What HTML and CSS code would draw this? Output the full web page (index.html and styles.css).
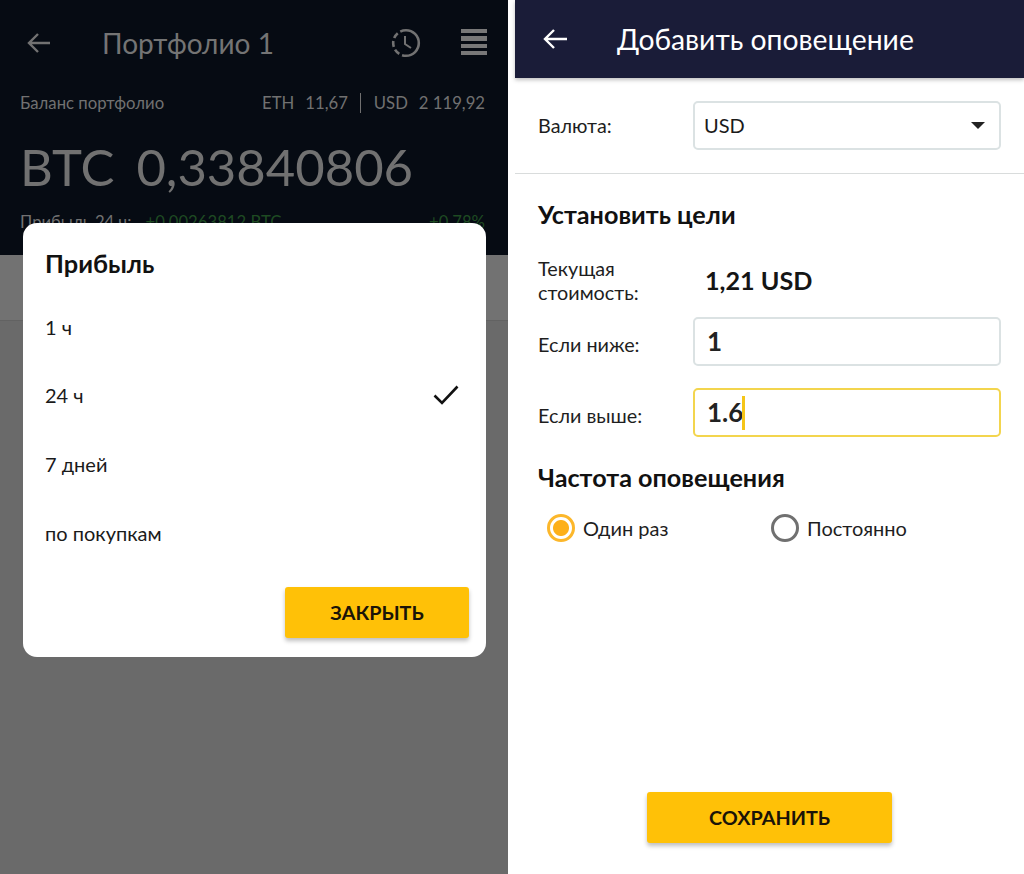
FILE: index.html
```html
<!DOCTYPE html>
<html lang="ru">
<head>
<meta charset="utf-8">
<title>Портфолио</title>
<link rel="stylesheet" href="styles.css">
</head>
<body>
<div class="app">
  <section class="left">
    <div class="dark">
      <div class="topbar">
        <svg class="back" width="26" height="22" viewBox="0 0 26 22"><path d="M24 11H3M12 2l-9 9 9 9" fill="none" stroke="#727272" stroke-width="2.4"/></svg>
        <h1 class="ptitle">Портфолио 1</h1>
        <svg class="clock" width="30" height="30" viewBox="0 0 30 30"><circle cx="15" cy="15" r="12.8" fill="none" stroke="#727272" stroke-width="2.6" stroke-dasharray="24 3 6 3 6 3 6 3 40"/><path d="M14 8v8l6 4" fill="none" stroke="#727272" stroke-width="2"/></svg>
        <div class="burger"><i></i><i></i><i></i><i></i></div>
      </div>
      <div class="balrow">
        <span>Баланс портфолио</span>
        <span class="rates"><span>ETH</span><span class="val">11,67</span><b></b><span>USD</span><span class="val">2 119,92</span></span>
      </div>
      <div class="btc"><span>BTC</span><span class="btcval">0,33840806</span></div>
      <div class="profit"><span>Прибыль 24 ч: <em>+0,00263812 BTC</em></span><em>+0,78%</em></div>
    </div>
    <div class="subbar"></div>
    <div class="modal">
      <h2>Прибыль</h2>
      <ul class="opts">
        <li>1 ч</li>
        <li>24 ч<svg width="28" height="22" viewBox="0 0 28 22"><path d="M2.5 11.5l7.500 7.500L25.500 2.500" fill="none" stroke="#111" stroke-width="2.6"/></svg></li>
        <li>7 дней</li>
        <li>по покупкам</li>
      </ul>
      <div class="modal-foot"><button class="btn close">ЗАКРЫТЬ</button></div>
    </div>
  </section>
  <section class="right">
    <header class="rhead">
      <svg width="26" height="22" viewBox="0 0 26 22"><path d="M25 11H3M12 2l-9 9 9 9" fill="none" stroke="#fff" stroke-width="2.4"/></svg>
      <h1>Добавить оповещение</h1>
    </header>
    <div class="currow">
      <label>Валюта:</label>
      <div class="field select">USD<span class="caret"></span></div>
    </div>
    <div class="form">
      <h2 class="goals">Установить цели</h2>
      <div class="row cur"><label>Текущая стоимость:</label><strong>1,21 USD</strong></div>
      <div class="row low"><label>Если ниже:</label><div class="field num">1</div></div>
      <div class="row high"><label>Если выше:</label><div class="field num active">1.6<span class="cursor"></span></div></div>
      <h2 class="freq">Частота оповещения</h2>
      <div class="radios">
        <span class="radio on"><i></i>Один раз</span>
        <span class="radio"><i></i>Постоянно</span>
      </div>
    </div>
    <div class="savewrap"><button class="btn save">СОХРАНИТЬ</button></div>
  </section>
</div>
</body>
</html>
```
FILE: styles.css
```css
* { box-sizing: border-box; }
html, body { margin: 0; padding: 0; background: #fff; }
body { font-family: Lato, "Open Sans", "Noto Sans", sans-serif; color: #1a1a1a; }
h1, h2, ul { margin: 0; padding: 0; font-weight: 400; }
.app { display: flex; width: 1024px; height: 874px; overflow: hidden; }

.left { position: relative; width: 508px; height: 874px; background: #6a6a6a; flex: none; }
.dark { height: 255px; background: #060b13; padding: 0 23px 0 20px; color: #717171; overflow: hidden; }
.topbar { display: flex; align-items: center; height: 86px; }
.back { margin-left: 6px; flex: none; }
.ptitle { font-size: 28px; margin-left: 50px; flex: 1; color: #747474; }
.clock { margin-right: 40px; flex: none; }
.burger { display: flex; flex-direction: column; gap: 3px; width: 26px; margin-right: -2px; margin-top: -2px; flex: none; }
.burger i { display: block; height: 4.300px; background: #787878; }
.balrow { display: flex; justify-content: space-between; font-size: 16.700px; height: 36px; align-items: center; margin-top: -1px; }
.rates { display: flex; align-items: center; }
.rates .val { margin-left: 11px; }
.rates b { width: 1px; height: 20px; background: #707070; margin: 0 12.500px; }
.btc { display: flex; font-size: 50.800px; line-height: 60px; margin-top: 16px; color: #717171; white-space: nowrap; }
.btcval { margin-left: 22px; }
.profit { display: flex; justify-content: space-between; font-size: 16.700px; margin-top: 15px; }
.profit em { font-style: normal; color: #1e4a22; margin-left: 10px; }

.subbar { height: 66px; background: #727272; border-bottom: 1px solid #626262; }

.modal { position: absolute; left: 23px; top: 223px; width: 463px; height: 434px; background: #fff; border-radius: 14px; padding: 25px 17px 0 22px; }
.modal h2 { font-size: 25.400px; font-weight: 700; color: #111; line-height: 30px; }
.opts { list-style: none; margin-top: 14.500px; }
.opts li { display: flex; justify-content: space-between; align-items: center; height: 68.600px; font-size: 20px; color: #1a1a1a; padding-right: 8px; }
.opts svg { margin-left: -1px; transform: translateX(-1px); }
.modal-foot { display: flex; justify-content: flex-end; margin-top: 20.500px; }

.btn { background: #ffc107; border: 0; border-radius: 3px; font-family: inherit; font-weight: 700; font-size: 19.800px; color: #1a1408; box-shadow: 0 3px 4px rgba(0,0,0,.25); padding: 0 0 2px; }
.close { width: 184px; height: 51px; }

.right { width: 509px; margin-left: 7px; height: 874px; background: #fff; display: flex; flex-direction: column; flex: none; }
.rhead { height: 78px; background: #1a1c38; display: flex; align-items: center; padding-left: 27px; color: #fff; box-shadow: 0 2px 4px rgba(0,0,0,.25); flex: none; }
.rhead h1 { font-size: 28.300px; margin-left: 49px; }
.currow { display: flex; align-items: center; height: 96px; padding: 0 23px 1px; border-bottom: 1px solid #d9dcdc; font-size: 20px; flex: none; }
.currow label, .row label { width: 155px; flex: none; font-size: 19.800px; color: #1e1e1e; line-height: 24.500px; }
.field { flex: 1; height: 49px; border: 2px solid #dbe2e3; border-radius: 5px; display: flex; align-items: center; background: #fff; }
.select { position: relative; padding-left: 9px; font-size: 20px; }
.caret { position: absolute; right: 14px; top: 19px; border: 7.500px solid transparent; border-top: 7.500px solid #222; border-bottom: 0; }
.form { padding: 0 23px; flex: 1; }
.goals { font-size: 25.200px; font-weight: 700; color: #111; line-height: 30px; margin-top: 25px; }
.row { display: flex; align-items: center; }
.cur { margin-top: 25px; height: 52px; }
.cur label { width: 167px; }
.cur strong { font-size: 25.200px; font-weight: 700; color: #151515; }
.low { margin-top: 11px; }
.high { margin-top: 22px; }
.low label, .high label { padding-top: 5px; }
.num { padding: 0 0 2px 12px; font-size: 26px; font-weight: 700; color: #222; }
.active { border-color: #f3d54e; }
.cursor { width: 3px; height: 34px; background: #f5c518; margin-left: -1px; margin-top: 2px; }
.freq { font-size: 25.200px; font-weight: 700; color: #111; line-height: 30px; margin-top: 25px; }
.radios { display: flex; margin-top: 22px; padding-left: 9px; font-size: 20px; }
.radio { display: flex; align-items: center; width: 224px; color: #1e1e1e; }
.radio i { width: 28px; height: 28px; border-radius: 50%; border: 3px solid #707070; margin-right: 8px; display: block; background: #fff; }
.radio.on i { border-color: #fcb72b; background: radial-gradient(circle, #fdb01a 0 7.500px, #fff 8.500px); }
.savewrap { display: flex; justify-content: center; padding-bottom: 31px; flex: none; }
.save { width: 245px; height: 51px; }
```
